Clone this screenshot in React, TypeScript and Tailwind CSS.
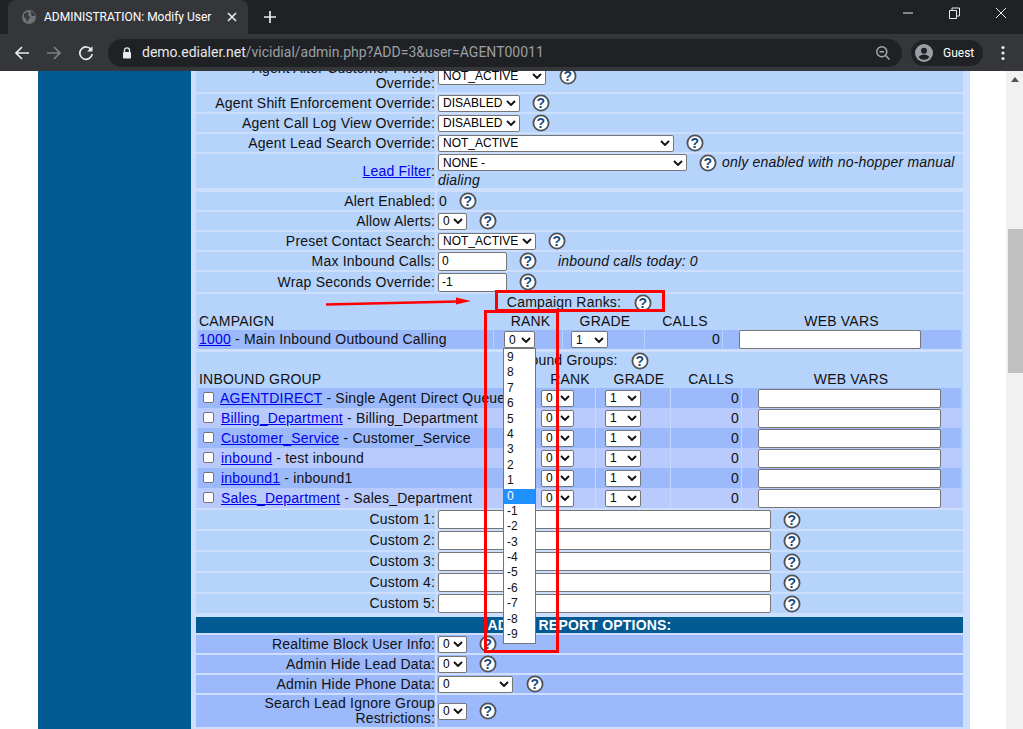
import type { ReactNode } from 'react'

const rowLight = 'bg-[#b6d3fb]'
const rowDark = 'bg-[#9bb9fb]'

function Help({ className = '' }: { className?: string }) {
  return (
    <svg width="18" height="18" viewBox="0 0 18 18" className={`inline-block shrink-0 ${className}`}>
      <circle cx="9" cy="9" r="7.6" fill="#fff" stroke="#4f5357" strokeWidth="1.8" />
      <text x="9" y="13.8" textAnchor="middle" fontSize="14" fontWeight="700" fontFamily="Liberation Sans, sans-serif" fill="#12497f">?</text>
    </svg>
  )
}

function Select({ value, w, className = '' }: { value: string; w: number; className?: string }) {
  return (
    <span
      style={{ width: w }}
      className={`inline-flex h-[17px] shrink-0 items-center justify-between rounded-[2px] border border-[#767676] bg-white pl-[4px] pr-[3px] text-[12px] leading-none tracking-normal text-black ${className}`}
    >
      <span>{value}</span>
      <svg width="10" height="6" viewBox="0 0 10 6" className="shrink-0">
        <path d="M1 1l4 4 4-4" fill="none" stroke="#111" strokeWidth="1.9" />
      </svg>
    </span>
  )
}

function Input({ w, value = '', className = '' }: { w: number; value?: string; className?: string }) {
  return (
    <span
      style={{ width: w }}
      className={`inline-flex h-[19px] shrink-0 items-center rounded-[2px] border border-[#767676] bg-white pl-[3px] text-[12px] tracking-normal text-black ${className}`}
    >
      {value}
    </span>
  )
}

function Row({ label, h = 18, dark = false, children }: { label: ReactNode; h?: number; dark?: boolean; children: ReactNode }) {
  const bg = dark ? rowDark : rowLight
  return (
    <div style={{ height: h }} className="grid shrink-0 grid-cols-[239px_526px] grid-rows-[100%] gap-x-[2px]">
      <div className={`${bg} flex items-center justify-end text-right leading-[15px]`}>
        <span className={h === 19 ? 'pb-[1px]' : ''}>{label}</span>
      </div>
      <div className={`${bg} flex items-center pl-[1px]`}>{children}</div>
    </div>
  )
}

const inbound = [
  { id: 'AGENTDIRECT', name: 'Single Agent Direct Queue', bg: rowDark, inset: 'pl-[22px]' },
  { id: 'Billing_Department', name: 'Billing_Department', bg: 'bg-[#b9cbfd]', inset: 'pl-[23px]' },
  { id: 'Customer_Service', name: 'Customer_Service', bg: rowDark, inset: 'pl-[23px]' },
  { id: 'inbound', name: 'test inbound', bg: 'bg-[#b9cbfd]', inset: 'pl-[23px]' },
  { id: 'inbound1', name: 'inbound1', bg: rowDark, inset: 'pl-[23px]' },
  { id: 'Sales_Department', name: 'Sales_Department', bg: 'bg-[#b9cbfd]', inset: 'pl-[23px]' },
]

const ranks = ['9', '8', '7', '6', '5', '4', '3', '2', '1', '0', '-1', '-2', '-3', '-4', '-5', '-6', '-7', '-8', '-9']

function Chrome() {
  return (
    <div className="h-[71px] shrink-0 bg-[#35363a] font-['Roboto',_sans-serif] tracking-normal text-white">
      <div className="flex h-[34px] items-end bg-[#202124]">
        <div className="ml-[8px] flex h-[34px] w-[240px] items-center rounded-t-[8px] bg-[#35363a] pl-[13px] pr-[11px]">
          <svg width="16" height="16" viewBox="0 0 16 16" className="shrink-0">
            <circle cx="8" cy="8" r="7" fill="#6f7175" />
            <path d="M3 5l3-2 2 1-1 2 2 2-1 2-2 3-1-3-2-2zM10 2l3 2 1 3-3 0-1-2z" fill="#3a3b3f" />
          </svg>
          <span className="ml-[7px] flex-1 truncate text-[12px]">ADMINISTRATION: Modify User</span>
          <svg width="10" height="10" viewBox="0 0 10 10">
            <path d="M1 1l8 8M9 1l-8 8" stroke="#e8eaed" strokeWidth="1.7" />
          </svg>
        </div>
        <svg width="14" height="14" viewBox="0 0 14 14" className="mb-[10px] ml-[15px]">
          <path d="M7 1v12M1 7h12" stroke="#e8eaed" strokeWidth="1.7" />
        </svg>
        <div className="mb-[15px] ml-auto flex items-center">
          <svg width="46" height="12" viewBox="0 0 46 12"><path d="M18 6h10" stroke="#e8eaed" strokeWidth="1" /></svg>
          <svg width="46" height="12" viewBox="0 0 46 12">
            <path d="M18.5 3.5h7v8h-7zM21 3.5V1h7.5v8h-3" fill="none" stroke="#e8eaed" strokeWidth="1" />
          </svg>
          <svg width="46" height="12" viewBox="0 0 46 12">
            <path d="M19 1l10 10M29 1L19 11" stroke="#e8eaed" strokeWidth="1" />
          </svg>
        </div>
      </div>
      <div className="flex h-[37px] items-center">
        <svg width="16" height="16" viewBox="0 0 16 16" className="ml-[14px]">
          <path d="M15 8H2M8 2L2 8l6 6" fill="none" stroke="#e8eaed" strokeWidth="1.7" />
        </svg>
        <svg width="16" height="16" viewBox="0 0 16 16" className="ml-[16px]">
          <path d="M1 8h13M8 2l6 6-6 6" fill="none" stroke="#7d7f83" strokeWidth="1.7" />
        </svg>
        <svg width="16" height="16" viewBox="0 0 16 16" className="ml-[16px]">
          <path d="M13.4 5A6.2 6.2 0 1 0 14.2 9" fill="none" stroke="#e8eaed" strokeWidth="1.7" />
          <path d="M14.5 1.2v5.4H9.1z" fill="#e8eaed" />
        </svg>
        <div className="ml-[14px] flex h-[28px] w-[794px] items-center rounded-full bg-[#202124] pl-[14px] pr-[11px]">
          <svg width="10" height="12" viewBox="0 0 10 12" className="shrink-0">
            <path d="M2.5 5V3.3a2.5 2.5 0 0 1 5 0V5" fill="none" stroke="#e8eaed" strokeWidth="1.3" />
            <rect x="1" y="5" width="8" height="6.5" rx="0.8" fill="#e8eaed" />
          </svg>
          <span className="ml-[10px] flex-1 text-[14px] text-[#9aa0a6]">
            <span className="text-[#e8eaed]">demo.edialer.net</span>/vicidial/admin.php?ADD=3&amp;user=AGENT00011
          </span>
          <svg width="16" height="16" viewBox="0 0 16 16">
            <circle cx="6.8" cy="6.8" r="5" fill="none" stroke="#a6a8ab" strokeWidth="1.5" />
            <path d="M4.5 6.8h4.6M10.5 10.5l4 4" stroke="#a6a8ab" strokeWidth="1.5" />
          </svg>
        </div>
        <div className="ml-[9px] flex h-[26px] w-[72px] items-center rounded-full bg-[#202124] pl-[4px]">
          <svg width="18" height="18" viewBox="0 0 18 18" className="shrink-0">
            <circle cx="9" cy="9" r="9" fill="#9aa0a6" />
            <circle cx="9" cy="6.8" r="3" fill="#202124" />
            <path d="M3.6 13.2c1-2 3.4-2.8 5.4-2.8s4.4.8 5.4 2.8a7 7 0 0 1-10.8 0z" fill="#202124" />
          </svg>
          <span className="ml-[10px] text-[12px]">Guest</span>
        </div>
        <svg width="4" height="16" viewBox="0 0 4 16" className="ml-[18px]">
          <circle cx="2" cy="2.5" r="1.6" fill="#e8eaed" />
          <circle cx="2" cy="8" r="1.6" fill="#e8eaed" />
          <circle cx="2" cy="13.5" r="1.6" fill="#e8eaed" />
        </svg>
      </div>
    </div>
  )
}

export default function App() {
  return (
    <div className="flex h-[729px] w-[1023px] flex-col overflow-hidden bg-white font-['Liberation_Sans',_Arial,_sans-serif] text-[14px] tracking-[0.2px] text-[#111]">
      <Chrome />
      <div className="relative flex min-h-0 flex-1">
        <div className="ml-[38px] w-[153px] shrink-0 bg-[#015a91]" />
        <div className="flex w-[779px] shrink-0 flex-col gap-y-[2px] overflow-hidden bg-[#cddffc] pl-[5px]">
          <div className="-mt-[11px]">
            <Row label="Agent Alter Customer Phone Override:" h={32}>
              <Select value="NOT_ACTIVE" w={108} />
              <Help className="ml-[13px]" />
            </Row>
          </div>
          <Row label="Agent Shift Enforcement Override:">
            <Select value="DISABLED" w={82} /><Help className="ml-[12px]" />
          </Row>
          <Row label="Agent Call Log View Override:">
            <Select value="DISABLED" w={82} /><Help className="ml-[12px]" />
          </Row>
          <Row label="Agent Lead Search Override:">
            <Select value="NOT_ACTIVE" w={236} /><Help className="ml-[12px]" />
          </Row>
          <Row label={<><a className="text-[#0000ee] underline">Lead Filter</a>:</>} h={34}>
            <div className="w-full leading-[17px]">
              <div className="flex items-center">
                <Select value="NONE -" w={249} />
                <Help className="ml-[12px]" />
                <i className="ml-[5px]">only enabled with no-hopper manual</i>
              </div>
              <i className="block">dialing</i>
            </div>
          </Row>
          <div className="h-0 shrink-0" />
          <Row label="Alert Enabled:">
            <span className="pl-[1px]">0</span><Help className="ml-[12px]" />
          </Row>
          <Row label="Allow Alerts:">
            <Select value="0" w={29} /><Help className="ml-[12px]" />
          </Row>
          <Row label="Preset Contact Search:">
            <Select value="NOT_ACTIVE" w={98} /><Help className="ml-[12px]" />
          </Row>
          <Row label="Max Inbound Calls:">
            <Input w={69} value="0" /><Help className="ml-[12px]" />
            <i className="ml-[21px]">inbound calls today: 0</i>
          </Row>
          <Row label="Wrap Seconds Override:" h={20}>
            <Input w={69} value="-1" /><Help className="ml-[12px]" />
          </Row>

          <div className={`h-[55px] w-[767px] shrink-0 ${rowLight} px-[2px]`}>
            <div className="flex h-[17px] items-center justify-center">
              Campaign Ranks:<Help className="ml-[13px]" />
            </div>
            <div className="mb-[2px] grid h-[17px] grid-cols-[295px_69px_82px_78px_239px] items-center text-center">
              <span className="pl-[1px] text-left">CAMPAIGN</span>
              <span className="pl-[6px]">RANK</span>
              <span className="pl-[4px]">GRADE</span>
              <span className="pl-[4px]">CALLS</span>
              <span>WEB VARS</span>
            </div>
            <div className={`grid h-[19px] grid-cols-[295px_69px_82px_78px_239px] grid-rows-[100%] items-center ${rowDark}`}>
              <span className="pb-[1px] pl-[1px]"><a className="text-[#0000ee] underline">1000</a> - Main Inbound Outbound Calling</span>
              <span className="flex h-full items-center border-l border-[#b6d3fb] pl-[10px]"><Select value="0" w={31} /></span>
              <span className="flex h-full items-center border-l border-[#b6d3fb] pl-[8px]"><Select value="1" w={37} /></span>
              <span className="flex h-full items-center justify-end border-l border-[#b6d3fb] pr-[2px]">0</span>
              <span className="flex h-full items-center border-l border-[#b6d3fb] pl-[16px]"><Input w={182} className="h-[18px]" /></span>
            </div>
          </div>

          <div className={`mt-[1px] h-[156px] w-[767px] shrink-0 ${rowLight} px-[2px]`}>
            <div className="flex h-[17px] items-center justify-center">
              Inbound Groups:<Help className="ml-[13px]" />
            </div>
            <div className="grid h-[19px] grid-cols-[342px_60px_78px_66px_214px] items-center text-center">
              <span className="pl-[1px] text-left">INBOUND GROUP</span>
              <span>RANK</span>
              <span>GRADE</span>
              <span>CALLS</span>
              <span>WEB VARS</span>
            </div>
            {inbound.map((g) => (
              <div key={g.id} className={`grid h-[20px] grid-cols-[333px_64px_75px_71px_220px] grid-rows-[100%] items-center ${g.bg}`}>
                <span className="relative overflow-hidden whitespace-nowrap">
                  <span className="absolute left-[5px] top-[4px] h-[11px] w-[11px] rounded-[2px] border border-[#767676] bg-white" />
                  <span className={`block ${g.inset}`}><a className="text-[#0000ee] underline">{g.id}</a> - {g.name}</span>
                </span>
                <span className="flex h-full items-center justify-end pr-[21px]"><Select value="0" w={33} /></span>
                <span className="flex h-full items-center border-l border-[#c4d8fd] pl-[9px]"><Select value="1" w={36} /></span>
                <span className="flex h-full items-center justify-end border-l border-[#c4d8fd] pr-[2px]">0</span>
                <span className="flex h-full items-center border-l border-[#c4d8fd] pl-[16px]"><Input w={183} /></span>
              </div>
            ))}
          </div>

          {[1, 2, 3, 4, 5].map((n) => (
            <Row key={n} label={`Custom ${n}:`} h={19}>
              <Input w={333} /><Help className="ml-[12px]" />
            </Row>
          ))}

          <div className="mt-[2px] flex h-[16px] w-[767px] shrink-0 items-center justify-center bg-[#015a91] font-bold text-white">
            ADMIN REPORT OPTIONS:
          </div>
          <Row label="Realtime Block User Info:" dark>
            <Select value="0" w={29} /><Help className="ml-[12px]" />
          </Row>
          <Row label="Admin Hide Lead Data:" dark>
            <Select value="0" w={29} /><Help className="ml-[12px]" />
          </Row>
          <Row label="Admin Hide Phone Data:" dark>
            <Select value="0" w={75} /><Help className="ml-[13px]" />
          </Row>
          <Row label="Search Lead Ignore Group Restrictions:" h={32} dark>
            <Select value="0" w={29} /><Help className="ml-[12px]" />
          </Row>
        </div>
        <div className="ml-auto w-[17px] bg-[#f1f1f1]">
          <div className="flex h-[17px] items-center justify-center">
            <span className="h-0 w-0 border-x-[4px] border-b-[5px] border-x-transparent border-b-[#505050]" />
          </div>
          <div className="ml-[2px] mt-[141px] h-[144px] bg-[#c1c1c1]" />
        </div>

        {/* dropdown and annotations sit over the form */}
        <div className="absolute left-[503px] top-[277px] w-[33px] border border-[#767676] bg-white pb-[1px] pt-[1px] text-[12px] leading-[15.4px] tracking-normal">
          {ranks.map((r) => (
            <div key={r} className={`h-[15.4px] pl-[3px] ${r === '0' ? 'bg-[#1e90ff] text-white' : ''}`}>{r}</div>
          ))}
        </div>
        <div className="absolute left-[495px] top-[219px] h-[22px] w-[170px] border-[3px] border-[#fe0000]" />
        <div className="absolute left-[484px] top-[239px] h-[343px] w-[75px] border-[3px] border-[#fe0000]" />
        <svg width="150" height="14" viewBox="0 0 150 14" className="absolute left-[324px] top-[224px]">
          <path d="M2 9.5L134 6.5" stroke="#fe0000" strokeWidth="2.5" />
          <path d="M132 2.500L147 6 132 9.5z" fill="#fe0000" />
        </svg>
      </div>
    </div>
  )
}
